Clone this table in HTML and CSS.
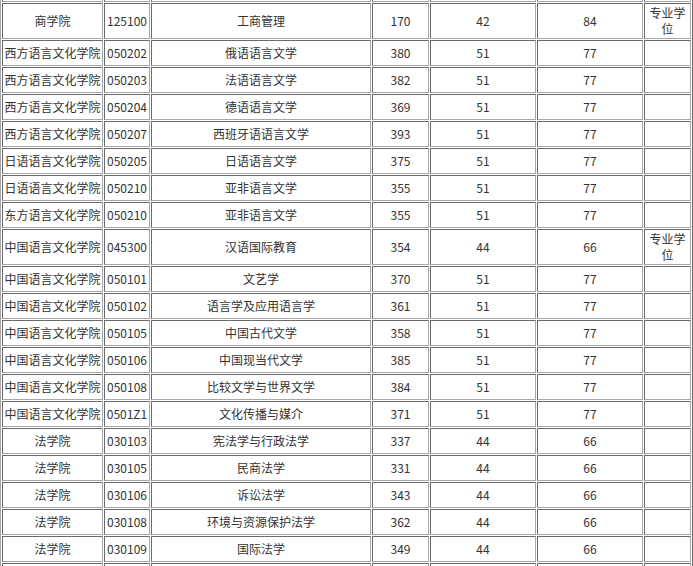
FILE: index.html
```
<!DOCTYPE html>
<html lang="zh-CN">
<head>
<meta charset="utf-8">
<title>分数线</title>
<link rel="stylesheet" href="styles.css">
</head>
<body>
<table class="score">
<colgroup>
<col class="c1"><col class="c2"><col class="c3"><col class="c4"><col class="c5"><col class="c6"><col class="c7">
</colgroup>
<tbody>
<tr><td></td><td></td><td></td><td></td><td></td><td></td><td></td></tr>
<tr><td>商学院</td><td>125100</td><td>工商管理</td><td>170</td><td>42</td><td>84</td><td class="note">专业学位</td></tr>
<tr><td>西方语言文化学院</td><td>050202</td><td>俄语语言文学</td><td>380</td><td>51</td><td>77</td><td></td></tr>
<tr><td>西方语言文化学院</td><td>050203</td><td>法语语言文学</td><td>382</td><td>51</td><td>77</td><td></td></tr>
<tr><td>西方语言文化学院</td><td>050204</td><td>德语语言文学</td><td>369</td><td>51</td><td>77</td><td></td></tr>
<tr><td>西方语言文化学院</td><td>050207</td><td>西班牙语语言文学</td><td>393</td><td>51</td><td>77</td><td></td></tr>
<tr><td>日语语言文化学院</td><td>050205</td><td>日语语言文学</td><td>375</td><td>51</td><td>77</td><td></td></tr>
<tr><td>日语语言文化学院</td><td>050210</td><td>亚非语言文学</td><td>355</td><td>51</td><td>77</td><td></td></tr>
<tr><td>东方语言文化学院</td><td>050210</td><td>亚非语言文学</td><td>355</td><td>51</td><td>77</td><td></td></tr>
<tr><td>中国语言文化学院</td><td>045300</td><td>汉语国际教育</td><td>354</td><td>44</td><td>66</td><td class="note">专业学位</td></tr>
<tr><td>中国语言文化学院</td><td>050101</td><td>文艺学</td><td>370</td><td>51</td><td>77</td><td></td></tr>
<tr><td>中国语言文化学院</td><td>050102</td><td>语言学及应用语言学</td><td>361</td><td>51</td><td>77</td><td></td></tr>
<tr><td>中国语言文化学院</td><td>050105</td><td>中国古代文学</td><td>358</td><td>51</td><td>77</td><td></td></tr>
<tr><td>中国语言文化学院</td><td>050106</td><td>中国现当代文学</td><td>385</td><td>51</td><td>77</td><td></td></tr>
<tr><td>中国语言文化学院</td><td>050108</td><td>比较文学与世界文学</td><td>384</td><td>51</td><td>77</td><td></td></tr>
<tr><td>中国语言文化学院</td><td>0501Z1</td><td>文化传播与媒介</td><td>371</td><td>51</td><td>77</td><td></td></tr>
<tr><td>法学院</td><td>030103</td><td>宪法学与行政法学</td><td>337</td><td>44</td><td>66</td><td></td></tr>
<tr><td>法学院</td><td>030105</td><td>民商法学</td><td>331</td><td>44</td><td>66</td><td></td></tr>
<tr><td>法学院</td><td>030106</td><td>诉讼法学</td><td>343</td><td>44</td><td>66</td><td></td></tr>
<tr><td>法学院</td><td>030108</td><td>环境与资源保护法学</td><td>362</td><td>44</td><td>66</td><td></td></tr>
<tr><td>法学院</td><td>030109</td><td>国际法学</td><td>349</td><td>44</td><td>66</td><td></td></tr>
<tr><td></td><td></td><td></td><td></td><td></td><td></td><td></td></tr>
</tbody>
</table>
</body>
</html>
```
FILE: styles.css
```
html, body {
  margin: 0;
  padding: 0;
  background: #ffffff;
  overflow: hidden;
}

.score {
  width: 693px;
  margin-top: -26px;
  table-layout: fixed;
  border-collapse: separate;
  border-spacing: 1px;
  border: 1px solid;
  border-color: #a8a8a8 #6a6a6a #6a6a6a #a8a8a8;
  font-family: "Noto Sans CJK SC", "Noto Sans", sans-serif;
  font-size: 12px;
  line-height: 16px;
  color: #333333;
}

.c1 { width: 101px; }
.c2 { width: 46px; }
.c3 { width: 220px; }
.c4 { width: 57px; }
.c5 { width: 106px; }
.c6 { width: 106px; }
.c7 { width: 47px; }

.score tr {
  height: 26px;
}

.score td {
  padding: 1px;
  border: 1px solid;
  border-color: #6a6a6a #a8a8a8 #a8a8a8 #6a6a6a;
  text-align: center;
  vertical-align: middle;
  white-space: nowrap;
  overflow: hidden;
}

.score td.note {
  white-space: normal;
}
```
